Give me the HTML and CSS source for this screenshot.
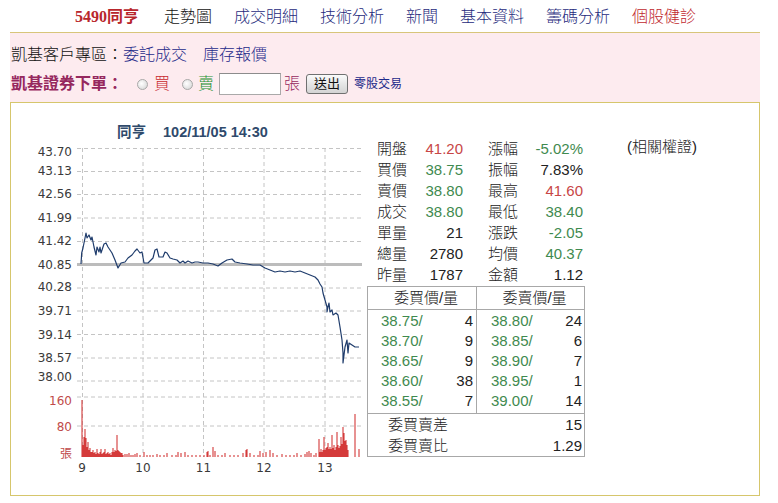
FILE: index.html
```html
<!DOCTYPE html>
<html lang="zh-Hant">
<head>
<meta charset="utf-8">
<title>5490同亨 走勢圖</title>
<link rel="stylesheet" href="styles.css">
</head>
<body>
<nav class="nav">
  <a class="nav-item stock">5490同亨</a>
  <a class="nav-item current">走勢圖</a>
  <a class="nav-item">成交明細</a>
  <a class="nav-item">技術分析</a>
  <a class="nav-item">新聞</a>
  <a class="nav-item">基本資料</a>
  <a class="nav-item">籌碼分析</a>
  <a class="nav-item health">個股健診</a>
</nav>

<section class="broker">
  <div class="broker-row">凱基客戶專區：<a class="link">委託成交</a><a class="link gap">庫存報價</a></div>
  <div class="broker-row order">
    <span class="order-title">凱基證券下單：</span>
    <span class="radio first"></span><span class="buy">買</span>
    <span class="radio second"></span><span class="sell">賣</span>
    <span class="qty-input"></span>
    <span class="unit">張</span>
    <span class="submit">送出</span>
    <a class="odd-lot">零股交易</a>
  </div>
</section>

<section class="quote-box">
  <svg class="chart" width="356" height="391" viewBox="11 103 356 391" xmlns="http://www.w3.org/2000/svg">
    <text class="title" x="117" y="137">同亨</text>
    <text class="title" x="163" y="137">102/11/05 14:30</text>

    <g class="grid">
      <path d="M77,148.5H362 M77,171.5H362 M77,194.5H362 M77,218H362 M77,241.5H362 M77,288H362 M77,311H362 M77,334.5H362 M77,358H362 M77,381H362 M77,397H362 M77,426H362"/>
      <path d="M82.5,148V457 M143,148V457 M203.5,148V457 M264,148V457 M325,148V457"/>
    </g>
    <path class="ref" d="M77,264.5H362"/>

    <g class="axis">
      <text x="72" y="156">43.70</text>
      <text x="72" y="175">43.13</text>
      <text x="72" y="198">42.56</text>
      <text x="72" y="222">41.99</text>
      <text x="72" y="245">41.42</text>
      <text x="72" y="268.5">40.85</text>
      <text x="72" y="291">40.28</text>
      <text x="72" y="314.5">39.71</text>
      <text x="72" y="338.5">39.14</text>
      <text x="72" y="361.5">38.57</text>
      <text x="72" y="380.5">38.00</text>
    </g>
    <g class="axis vol">
      <text x="72" y="404.5">160</text>
      <text x="72" y="430.5">80</text>
      <text x="72" y="457.5">張</text>
    </g>
    <g class="axis time">
      <text x="82" y="472">9</text>
      <text x="143" y="472">10</text>
      <text x="203.5" y="472">11</text>
      <text x="264" y="472">12</text>
      <text x="325" y="472">13</text>
    </g>

    <path class="price" d="M81,264 L81.7,253 L83,248 L86,233 L87,238 L89,235 L91,240 L92,237 L94,247 L96,255 L97,247 L99,252 L100,247 L101,253 L103,247 L104,244 L106,243 L108,247 L112,253 L115,260 L118,268 L121,263 L125,262 L128,258 L132,255 L135,251 L137,249 L140,253 L142,252 L144,263 L148,263 L153,258 L155,250 L157,249 L159,257 L163,257 L165,252 L167,253 L170,258 L173,259 L177,260 L180,263 L183,261 L185,263 L188,261 L192,263 L195,262 L198,262 L203,263 L208,263 L213,264 L218,266 L222,263 L227,260 L232,259 L235,262 L240,263 L247,264 L253,265 L260,265 L265,268 L270,270 L275,272 L280,271 L285,272 L290,271 L295,272 L300,271 L305,273 L310,275 L315,277 L318,280 L320,284 L322,287 L323,293 L325,300 L327,307 L327,312 L328,307 L329,303 L330,312 L332,310 L333,315 L336,313 L338,315 L340,327 L342,340 L343,353 L343,363 L345,347 L347,340 L348,353 L349,343 L352,345 L355,347 L359,347"/>

    <path class="vol-bars" d="M82,457V400 M83,457V445 M84,457V437 M85,457V429 M86,457V438 M87,457V447 M88,457V442 M89,457V450 M90,457V448 M91,457V452 M92,457V452 M93,457V450 M94,457V453 M95,457V452 M96,457V454 M97,457V449 M98,457V453 M99,457V454 M100,457V452 M101,457V449 M102,457V454 M103,457V453 M104,457V452 M105,457V449 M106,457V454 M107,457V453 M108,457V452 M109,457V454 M110,457V453 M111,457V455 M112,457V452 M113,457V448 M114,457V452 M115,457V450 M116,457V451 M117,457V435 M118,457V450 M119,457V451 M120,457V452 M121,457V453 M122,457V453 M123,457V455 M125,457V454 M127,457V454 M129,457V453 M131,457V455 M133,457V455 M135,457V454 M137,457V453 M140,457V455 M144,457V452 M147,457V455 M150,457V455 M153,457V455 M157,457V454 M160,457V455 M164,457V455 M167,457V453 M172,457V455 M176,457V455 M178,457V452 M181,457V453 M185,457V452 M188,457V455 M192,457V455 M196,457V455 M200,457V455 M204,457V455 M207,457V452 M208,457V451 M210,457V455 M213,457V447 M215,457V451 M218,457V455 M222,457V455 M225,457V453 M230,457V455 M234,457V455 M238,457V455 M243,457V453 M246,457V450 M247,457V449 M250,457V453 M254,457V455 M258,457V455 M260,457V451 M263,457V453 M266,457V452 M270,457V450 M273,457V453 M277,457V455 M282,457V454 M286,457V455 M290,457V455 M294,457V455 M297,457V453 M301,457V455 M305,457V454 M307,457V452 M309,457V451 M311,457V453 M314,457V455 M316,457V453 M319,457V439 M320,457V452 M321,457V449 M322,457V452 M323,457V450 M324,457V437 M325,457V450 M326,457V448 M327,457V447 M328,457V443 M329,457V449 M330,457V447 M331,457V449 M332,457V435 M333,457V448 M334,457V445 M335,457V450 M336,457V447 M337,457V432 M338,457V445 M339,457V448 M340,457V446 M341,457V437 M342,457V444 M343,457V427 M344,457V433 M345,457V441 M346,457V440 M347,457V445 M348,457V450 M355,457V414 M359,457V449"/>
  </svg>

  <div class="info">
    <div class="stats">
      <span class="lbl">開盤</span><span class="val up">41.20</span><span class="lbl2">漲幅</span><span class="val down">-5.02%</span>
      <span class="lbl">買價</span><span class="val down">38.75</span><span class="lbl2">振幅</span><span class="val">7.83%</span>
      <span class="lbl">賣價</span><span class="val down">38.80</span><span class="lbl2">最高</span><span class="val up">41.60</span>
      <span class="lbl">成交</span><span class="val down">38.80</span><span class="lbl2">最低</span><span class="val down">38.40</span>
      <span class="lbl">單量</span><span class="val">21</span><span class="lbl2">漲跌</span><span class="val down">-2.05</span>
      <span class="lbl">總量</span><span class="val">2780</span><span class="lbl2">均價</span><span class="val down">40.37</span>
      <span class="lbl">昨量</span><span class="val">1787</span><span class="lbl2">金額</span><span class="val">1.12</span>
    </div>

    <div class="book">
      <div class="book-head">
        <span class="head-cell bid">委買價/量</span>
        <span class="head-cell">委賣價/量</span>
      </div>
      <div class="book-body">
        <div class="side bid">
          <div class="level"><span class="px">38.75/</span><span>4</span></div>
          <div class="level"><span class="px">38.70/</span><span>9</span></div>
          <div class="level"><span class="px">38.65/</span><span>9</span></div>
          <div class="level"><span class="px">38.60/</span><span>38</span></div>
          <div class="level"><span class="px">38.55/</span><span>7</span></div>
        </div>
        <div class="side ask">
          <div class="level"><span class="px">38.80/</span><span>24</span></div>
          <div class="level"><span class="px">38.85/</span><span>6</span></div>
          <div class="level"><span class="px">38.90/</span><span>7</span></div>
          <div class="level"><span class="px">38.95/</span><span>1</span></div>
          <div class="level"><span class="px">39.00/</span><span>14</span></div>
        </div>
      </div>
      <div class="book-sum">
        <div class="sum-row"><span>委買賣差</span><span>15</span></div>
        <div class="sum-row"><span>委買賣比</span><span>1.29</span></div>
      </div>
    </div>
  </div>

  <div class="warrants">(相關權證)</div>
</section>
</body>
</html>
```

FILE: styles.css
```css
html, body {
  margin: 0;
  padding: 0;
  background: #ffffff;
}

body {
  font-family: "Liberation Sans", "Noto Sans CJK TC", sans-serif;
  font-size: 16px;
  font-weight: 300;
  color: #111111;
}

a {
  text-decoration: none;
}

/* top navigation */
.nav {
  display: flex;
  gap: 22px;
  height: 32px;
  box-sizing: border-box;
  padding: 7px 0 5px 75px;
  line-height: 20px;
  font-size: 16px;
}

.nav-item {
  color: #1e2a7c;
  white-space: nowrap;
}

.nav-item.stock {
  font-family: "Liberation Serif", "Noto Sans CJK TC", serif;
  font-weight: bold;
  color: #b8262c;
  margin-right: 3px;
}

.nav-item.current {
  color: #111111;
}

.nav-item.health {
  color: #c0282e;
}

/* broker strip */
.broker {
  margin-left: 10px;
  width: 750px;
  height: 70px;
  box-sizing: border-box;
  border-top: 1px solid #d8c57a;
  background: #fdebef;
  padding: 10px 0 6px 1px;
}

.broker-row {
  height: 24px;
  line-height: 24px;
  white-space: nowrap;
}

.link {
  color: #1e2a8a;
}

.link.gap {
  margin-left: 16px;
}

.broker-row.order {
  display: flex;
  align-items: center;
  margin-top: 5px;
}

.order-title {
  font-weight: bold;
  color: #96285e;
}

.radio {
  width: 9px;
  height: 9px;
  border-radius: 50%;
  border: 1px solid #a8a8a8;
  background: radial-gradient(circle at 40% 40%, #ffffff 0%, #e4e4e4 60%, #cfcfcf 100%);
}

.radio.first {
  margin-left: 14px;
}

.radio.second {
  margin-left: 12px;
}

.buy {
  color: #c8282e;
  margin-left: 6px;
}

.sell {
  color: #23912f;
  margin-left: 5px;
}

.qty-input {
  margin-left: 5px;
  width: 62px;
  height: 22px;
  box-sizing: border-box;
  background: #ffffff;
  border: 1px solid #a9a9a9;
  border-top-color: #8c8c8c;
}

.unit {
  margin-left: 3px;
  color: #96285e;
}

.submit {
  margin-left: 6px;
  width: 42px;
  height: 20px;
  box-sizing: border-box;
  border: 1px solid #707070;
  border-radius: 3px;
  background: linear-gradient(#fbfbfb, #e6e6e6 50%, #d4d4d4);
  font-size: 13px;
  font-weight: 400;
  line-height: 18px;
  text-align: center;
  color: #111111;
}

.odd-lot {
  margin-left: 6px;
  font-size: 12px;
  font-weight: 400;
  color: #1e2a8a;
}

/* quote box */
.quote-box {
  display: flex;
  align-items: flex-start;
  margin-left: 10px;
  width: 750px;
  height: 394px;
  box-sizing: border-box;
  border: 1px solid #d6c66c;
  background: #ffffff;
}

.chart {
  display: block;
  flex: none;
}

.chart .title {
  font-family: "Liberation Sans", "Noto Sans CJK TC", sans-serif;
  font-weight: bold;
  font-size: 14.5px;
  fill: #2f4a6c;
}

.chart .grid path {
  fill: none;
  stroke: #c4c4c4;
  stroke-width: 1;
  stroke-dasharray: 4 3;
}

.chart .ref {
  fill: none;
  stroke: #bcbcbc;
  stroke-width: 3;
}

.chart .axis text {
  font-family: "DejaVu Sans", "Noto Sans CJK TC", sans-serif;
  font-size: 12px;
  font-weight: 400;
  fill: #3a3a3a;
  text-anchor: end;
}

.chart .axis.vol text {
  fill: #c04a4a;
}

.chart .axis.time text {
  text-anchor: middle;
}

.chart .price {
  fill: none;
  stroke: #1f3c6c;
  stroke-width: 1.2;
  stroke-linejoin: round;
}

.chart .vol-bars {
  fill: none;
  stroke: #d43a3a;
  stroke-width: 1.1;
}

/* info column */
.info {
  flex: none;
  width: 218px;
  padding-top: 35px;
  font-size: 15px;
  color: #222222;
}

.stats {
  display: grid;
  grid-template-columns: 36px 50px 61px 59px;
  grid-auto-rows: 21px;
  line-height: 21px;
  padding-left: 10px;
}

.stats .val {
  text-align: right;
}

.stats .lbl2 {
  padding-left: 25px;
}

.up {
  color: #c84646;
}

.down {
  color: #3f8a4f;
}

.book {
  margin-top: 1px;
  width: 218px;
  box-sizing: border-box;
  border: 1px solid #a8a8a8;
}

.book-head {
  display: grid;
  grid-template-columns: 109px 1fr;
  height: 23px;
  box-sizing: border-box;
  border-bottom: 1px solid #a8a8a8;
  line-height: 22px;
}

.head-cell {
  text-align: center;
  padding-left: 8px;
}

.head-cell.bid {
  border-right: 1px solid #a8a8a8;
}

.book-body {
  display: grid;
  grid-template-columns: 109px 1fr;
  border-bottom: 1px solid #a8a8a8;
}

.side {
  padding: 1px 0 2px;
}

.side.bid {
  border-right: 1px solid #a8a8a8;
  padding-left: 13px;
  padding-right: 3px;
}

.side.ask {
  padding-left: 14px;
  padding-right: 2px;
}

.level {
  display: flex;
  justify-content: space-between;
  line-height: 20px;
}

.level .px {
  color: #3f8a4f;
}

.sum-row {
  display: flex;
  justify-content: space-between;
  line-height: 21px;
  padding: 0 2px 0 20px;
}

.warrants {
  flex: none;
  margin-left: 42px;
  padding-top: 33px;
  line-height: 21px;
  font-size: 15px;
  color: #222222;
}
```
